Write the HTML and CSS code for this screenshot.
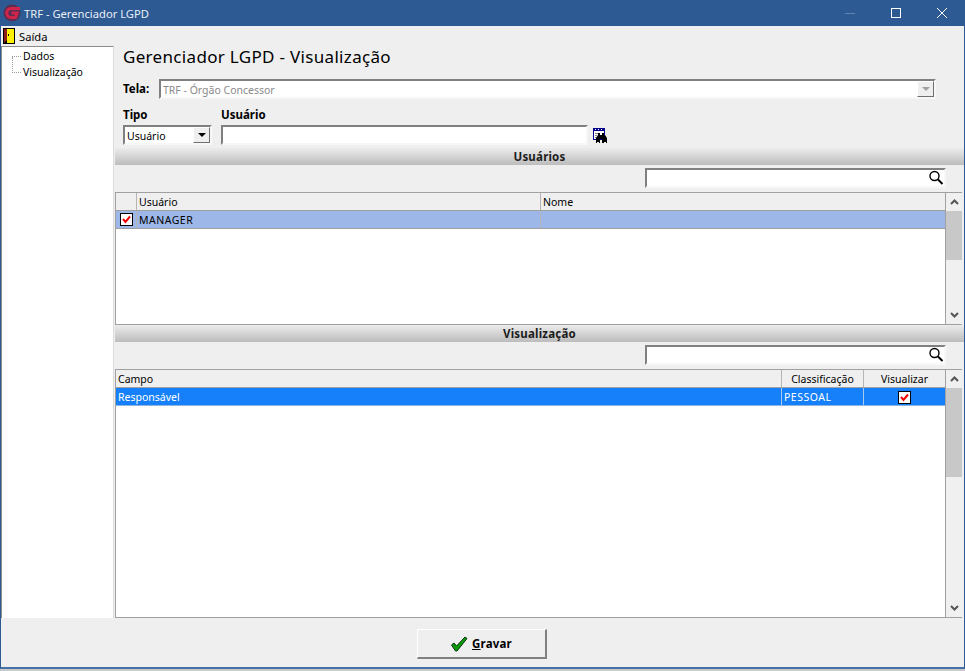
FILE: index.html
```html
<!DOCTYPE html>
<html lang="pt">
<head>
<meta charset="utf-8">
<title>TRF - Gerenciador LGPD</title>
<link rel="stylesheet" href="styles.css">
</head>
<body>
<div class="window">
  <header class="titlebar">
    <svg class="logo" width="18" height="18" viewBox="0 0 18 18"><circle cx="9" cy="9" r="8.500" fill="#5a2f52"/><path d="M17 4.500H8C5.500 4.500 3.800 6.500 3.800 9s1.700 4.500 4.200 4.500h4.500L14 9H8.500" fill="none" stroke="#d0244a" stroke-width="3"/></svg>
    <span class="title-text">TRF - Gerenciador LGPD</span>
    <div class="win-controls">
      <span class="win-btn"><svg width="12" height="12" viewBox="0 0 12 12"><path d="M1 6.500H11" stroke="#5f83b0" stroke-width="1"/></svg></span>
      <span class="win-btn"><svg width="12" height="12" viewBox="0 0 12 12"><rect x="1.500" y="1.500" width="9" height="9" fill="none" stroke="#fff"/></svg></span>
      <span class="win-btn"><svg width="12" height="12" viewBox="0 0 12 12"><path d="M1 1L11 11M11 1L1 11" stroke="#fff" stroke-width="1"/></svg></span>
    </div>
  </header>
  <nav class="menubar">
    <svg width="12" height="16" viewBox="0 0 12 16"><rect width="12" height="16" fill="#000"/><rect x="4" y="1" width="7" height="14" fill="#ffef00"/><path d="M1 1H4V12L1 15Z" fill="#8a1c1c"/><rect x="5" y="6" width="1" height="2" fill="#000"/></svg>
    <span>Saída</span>
  </nav>
  <div class="content">
    <aside class="tree">
      <div class="tree-item first">Dados</div>
      <div class="tree-item second">Visualização</div>
    </aside>
    <main class="main">
      <div class="form">
        <h1 class="heading">Gerenciador LGPD - Visualização</h1>
        <div class="tela-row">
          <label class="label tela-label">Tela:</label>
          <div class="field tela-field">
            <span class="field-text disabled-text">TRF - Órgão Concessor</span>
            <span class="drop disabled"><i></i></span>
          </div>
        </div>
        <div class="tipo-row">
          <div class="col">
            <label class="label">Tipo</label>
            <div class="field tipo-field"><span class="field-text">Usuário</span><span class="drop"><i></i></span></div>
          </div>
          <div class="col">
            <label class="label">Usuário</label>
            <div class="field user-field"></div>
          </div>
          <svg class="binoculars" width="16" height="16" viewBox="0 0 16 16">
            <rect x="0.500" y="0.500" width="11" height="11" fill="#fff" stroke="#00008b"/>
            <rect x="0" y="0" width="12" height="3" fill="#00008b"/>
            <path d="M2 1.500h1M5 1.500h1M8 1.500h1" stroke="#fff"/>
            <path d="M2 5.500h3M2 7.500h2M2 9.500h2" stroke="#808080"/>
            <path d="M5 7V5h2v2h2V5h2v2h1l2 3v5h-1v-1h-2v1H9v-4H7v4H6v-1H4v1H3v-5Z" fill="#000"/>
          </svg>
        </div>
      </div>

      <div class="section-bar">Usuários</div>
      <div class="search-row">
        <div class="field search-field">
          <svg width="16" height="16" viewBox="0 0 16 16"><circle cx="6.500" cy="6" r="4.500" fill="none" stroke="#000" stroke-width="1.400"/><path d="M10 9.500L14.500 14" stroke="#000" stroke-width="2"/></svg>
        </div>
      </div>
      <div class="grid-wrap users">
        <div class="grid">
          <div class="row head">
            <div class="cell c-check"></div>
            <div class="cell c-user">Usuário</div>
            <div class="cell c-fill">Nome</div>
          </div>
          <div class="row sel-light">
            <div class="cell c-check"><svg class="check" width="13" height="13" viewBox="0 0 13 13"><rect x="0.500" y="0.500" width="12" height="12" fill="#fff" stroke="#000"/><path d="M3 6l2.500 3L10 3.500" fill="none" stroke="#f00000" stroke-width="2"/></svg></div>
            <div class="cell c-user caps">MANAGER</div>
            <div class="cell c-fill"></div>
          </div>
        </div>
        <div class="scroll">
          <span class="arrow"><svg width="9" height="6" viewBox="0 0 9 6"><path d="M1 5L4.500 1.500L8 5" fill="none" stroke="#555" stroke-width="2"/></svg></span>
          <div class="track"><div class="thumb short"></div></div>
          <span class="arrow"><svg width="9" height="6" viewBox="0 0 9 6"><path d="M1 1L4.500 4.500L8 1" fill="none" stroke="#555" stroke-width="2"/></svg></span>
        </div>
      </div>

      <div class="section-bar">Visualização</div>
      <div class="search-row">
        <div class="field search-field">
          <svg width="16" height="16" viewBox="0 0 16 16"><circle cx="6.500" cy="6" r="4.500" fill="none" stroke="#000" stroke-width="1.400"/><path d="M10 9.500L14.500 14" stroke="#000" stroke-width="2"/></svg>
        </div>
      </div>
      <div class="grid-wrap views">
        <div class="grid">
          <div class="row head">
            <div class="cell c-fill">Campo</div>
            <div class="cell c-class center">Classificação</div>
            <div class="cell c-view center">Visualizar</div>
          </div>
          <div class="row sel-strong">
            <div class="cell c-fill">Responsável</div>
            <div class="cell c-class caps">PESSOAL</div>
            <div class="cell c-view center"><svg class="check" width="13" height="13" viewBox="0 0 13 13"><rect x="0.500" y="0.500" width="12" height="12" fill="#fff" stroke="#000"/><path d="M3 6l2.500 3L10 3.500" fill="none" stroke="#f00000" stroke-width="2"/></svg></div>
          </div>
        </div>
        <div class="scroll">
          <span class="arrow"><svg width="9" height="6" viewBox="0 0 9 6"><path d="M1 5L4.500 1.500L8 5" fill="none" stroke="#555" stroke-width="2"/></svg></span>
          <div class="track"><div class="thumb tall"></div></div>
          <span class="arrow"><svg width="9" height="6" viewBox="0 0 9 6"><path d="M1 1L4.500 4.500L8 1" fill="none" stroke="#555" stroke-width="2"/></svg></span>
        </div>
      </div>
    </main>
  </div>
  <footer class="footer">
    <button class="save" type="button">
      <svg width="18" height="16" viewBox="0 0 18 16"><path d="M1.500 9L4 7l2.500 3L15 1l2 1.500L7 15H5.500Z" fill="#0a9a0a" stroke="#04350f" stroke-width="1"/></svg>
      <span><u>G</u>ravar</span>
    </button>
  </footer>
</div>
</body>
</html>
```

FILE: styles.css
```css
* { box-sizing: border-box; }
html, body { margin: 0; height: 100%; }
body {
  width: 965px;
  height: 671px;
  overflow: hidden;
  background: #c9c9c9;
  font-family: "Noto Sans", "Liberation Sans", sans-serif;
  font-size: 10.500px;
  color: #000;
}
.window {
  width: 965px;
  height: 669px;
  display: flex;
  flex-direction: column;
  background: #efefef;
  border-left: 1px solid #2d5a92;
  border-right: 1px solid #2d5a92;
  border-bottom: 2px solid #4472a8;
}
.titlebar {
  height: 26px;
  flex: none;
  margin: 0 -1px;
  padding-left: 3px;
  display: flex;
  align-items: center;
  background: #2d5a92;
  color: #e8eef6;
  font-size: 11.200px;
}
.logo { flex: none; }
.title-text { margin-left: 3px; }
.win-controls { margin-left: auto; display: flex; }
.win-btn {
  width: 46px;
  height: 26px;
  display: flex;
  align-items: center;
  justify-content: center;
}
.menubar {
  height: 20px;
  flex: none;
  padding-left: 2px;
  display: flex;
  align-items: center;
  gap: 4px;
  font-size: 11.200px;
}
.content { flex: none; height: 572px; display: flex; }
.tree {
  width: 113px;
  margin-right: 1px;
  flex: none;
  padding-top: 2px;
  background: #fff;
  border: 1px solid #8c8c8c;
  border-right-color: #dcdcdc;
  border-bottom: 0;
}
.tree-item {
  height: 16px;
  line-height: 14px;
  position: relative;
}
.tree-item::before {
  content: "";
  position: absolute;
  left: 10px;
  top: 7px;
  width: 9px;
  border-top: 1px dotted #9a9a9a;
}
.tree-item.second::after {
  content: "";
  position: absolute;
  left: 10px;
  top: -8px;
  height: 16px;
  border-left: 1px dotted #9a9a9a;
}
.first { padding-left: 21px; }
.second { padding-left: 21px; }
.main {
  flex: 1;
  min-width: 0;
  display: flex;
  flex-direction: column;
}
.form { height: 102px; flex: none; padding: 0 0 0 8px; }
.heading {
  margin: 0;
  height: 33px;
  font-size: 17px;
  font-weight: 400;
  line-height: 21px;
  letter-spacing: 0.320px;
}
.label { font-weight: 700; font-size: 11.500px; line-height: 14px; }
.tela-row { display: flex; align-items: center; }
.tela-label { width: 36px; }
.field {
  background: #fff;
  border: 2px solid #808080;
  border-right-color: #f7f7f7;
  border-bottom-color: #f7f7f7;
  display: flex;
  align-items: center;
  height: 20px;
  padding-left: 2px;
}
.field-text { position: relative; top: 1px; }
.tela-field { width: 777px; }
.disabled-text { color: #8a8a8a; }
.drop {
  width: 17px;
  height: 16px;
  margin-left: auto;
  background: #efefef;
  border: 1px solid #fff;
  border-right-color: #707070;
  border-bottom-color: #707070;
  display: flex;
  align-items: center;
  justify-content: center;
}
.drop i {
  width: 0;
  height: 0;
  border-left: 4px solid transparent;
  border-right: 4px solid transparent;
  border-top: 4px solid #000;
}
.drop.disabled i { border-top-color: #a0a0a0; }
.tipo-row { display: flex; align-items: flex-start; gap: 9px; margin-top: 9px; }
.col { display: flex; flex-direction: column; gap: 3px; }
.tipo-field { width: 89px; }
.user-field { width: 367px; }
.binoculars { margin: 20px 0 0 -4px; }
.section-bar {
  height: 17px;
  flex: none;
  text-align: center;
  font-weight: 700;
  font-size: 11.500px;
  line-height: 18px;
  letter-spacing: 0.200px;
  color: #1c1c1c;
  background: linear-gradient(#ececec, #bcbcbc);
}
.search-row {
  height: 27px;
  flex: none;
  padding: 3px 18px 0 0;
  display: flex;
  justify-content: flex-end;
}
.search-field { width: 301px; justify-content: flex-end; }
.grid-wrap {
  display: flex;
  flex: none;
  margin-right: 2px;
  background: #fff;
  border: 1px solid #a0a0a0;
  border-right: 0;
}
.users { height: 133px; }
.views { height: 249px; }
.grid { flex: 1; min-width: 0; border-right: 1px solid #a0a0a0; }
.row { display: flex; height: 18px; border-bottom: 1px solid #a0a0a0; }
.cell {
  height: 100%;
  padding: 1px 0 0 2px;
  line-height: 15px;
  white-space: nowrap;
  display: flex;
  align-items: center;
  border-right: 1px solid #b5b5b5;
}
.cell:last-child { border-right: 0; }
.head { background: #efefef; }
.caps { letter-spacing: 0.500px; }
.c-check { width: 21px; flex: none; justify-content: center; padding: 0; }
.c-user { width: 404px; flex: none; }
.c-fill { flex: 1; min-width: 0; }
.c-class { width: 82px; flex: none; }
.c-view { width: 81px; flex: none; }
.center { justify-content: center; padding-left: 0; }
.sel-light { background: #9db8e8; }
.sel-strong { background: #1580fa; color: #fff; border-bottom-color: #8fb4e0; }
.sel-strong .cell { border-right-color: #a8c8ee; }
.check { display: block; }
.scroll {
  width: 16px;
  flex: none;
  display: flex;
  flex-direction: column;
  background: #f0f0f0;
}
.arrow {
  height: 18px;
  flex: none;
  display: flex;
  align-items: center;
  justify-content: center;
}
.track { flex: 1; min-height: 0; }
.thumb { background: #c8c8c8; }
.short { height: 49px; }
.tall { height: 89px; }
.footer {
  flex: 1;
  display: flex;
  justify-content: center;
  padding: 11px 2px 0 0;
}
.save {
  width: 130px;
  height: 30px;
  display: flex;
  align-items: center;
  justify-content: center;
  gap: 4px;
  padding: 0;
  background: #efefef;
  border: 2px solid #808080;
  border-left: 1px solid #fff;
  border-top: 1px solid #fff;
  outline: none;
  font-family: inherit;
  font-size: 11.500px;
  font-weight: 700;
  letter-spacing: 0.200px;
  color: #000;
}
```
